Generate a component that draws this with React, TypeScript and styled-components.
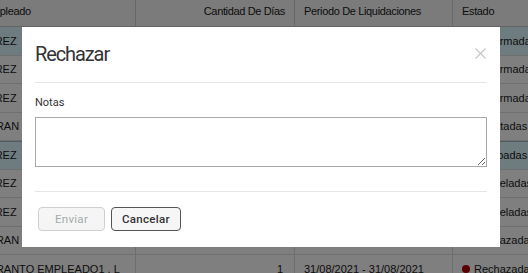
import React from "react";
import styled, { createGlobalStyle } from "styled-components";

const Global = createGlobalStyle`
  html, body { margin: 0; padding: 0; width: 528px; height: 273px; overflow: hidden; background: #fff; }
  body { font-family: "Liberation Sans", Arial, sans-serif; }
`;

const Page = styled.div`
  position: relative;
  width: 528px;
  height: 273px;
  overflow: hidden;
`;

const Table = styled.div`
  display: grid;
  grid-template-columns: 200px 159px 158px 160px;
  grid-auto-rows: 28.5px;
  grid-template-rows: 27px;
  margin-left: -65px;
  width: 677px;
  font-size: 11px;
  letter-spacing: -0.35px;
  color: #1a1a1a;
`;

const HeadCell = styled.div<{ $right?: boolean }>`
  background: #f6f6f6;
  border-bottom: 1px solid #c8c8c8;
  border-left: 1px solid #d0d0d0;
  display: flex;
  align-items: center;
  justify-content: ${(p) => (p.$right ? "flex-end" : "flex-start")};
  padding: 0 9px 4px;
  box-sizing: border-box;
  white-space: nowrap;
  overflow: hidden;
  &:first-child { border-left: none; padding-left: 49px; }
`;

const Cell = styled.div<{ $hl?: boolean; $right?: boolean; $topDark?: boolean }>`
  background: ${(p) => (p.$hl ? "#def8ff" : "#ffffff")};
  border-bottom: 1px solid #dedede;
  border-top: ${(p) => (p.$topDark ? "1px solid #a4b6c0" : "none")};
  border-left: 1px solid #dcdcdc;
  display: flex;
  align-items: center;
  justify-content: ${(p) => (p.$right ? "flex-end" : "flex-start")};
  padding: 0 11px 0 9px;
  box-sizing: border-box;
  white-space: nowrap;
  overflow: hidden;
  letter-spacing: 0;
  &:nth-child(4n + 1) { border-left: none; padding-left: 45px; }
`;

const Dot = styled.span<{ $c: string }>`
  width: 8px;
  height: 8px;
  border-radius: 50%;
  background: ${(p) => p.$c};
  margin-right: 4px;
  flex: none;
`;

const Overlay = styled.div`
  position: absolute;
  inset: 0;
  background: rgba(0, 0, 0, 0.5);
`;

const Modal = styled.div`
  position: absolute;
  left: 22px;
  top: 27px;
  width: 478px;
  height: 220px;
  background: #fff;
  display: flex;
  flex-direction: column;
  font-family: Roboto, "Noto Sans", sans-serif;
  color: #333;
`;

const Header = styled.div`
  margin: 0 13px;
  height: 55px;
  border-bottom: 1px solid #e5e5e5;
  display: flex;
  align-items: center;
  justify-content: space-between;
`;

const Title = styled.h4`
  margin: 0;
  font-size: 20px;
  font-weight: 400;
  letter-spacing: -1.1px;
  color: #333;
  padding-bottom: 1px;
`;

const Close = styled.button`
  border: none;
  background: none;
  padding: 0;
  margin-right: 1px;
  width: 12px;
  height: 12px;
  display: flex;
  align-items: center;
  justify-content: center;
  margin-bottom: 3px;
`;

const Body = styled.div`
  margin: 0 13px;
  padding: 13px 0 24px;
  border-bottom: 1px solid #e5e5e5;
  display: flex;
  flex-direction: column;
`;

const Label = styled.label`
  font-size: 11px;
  line-height: 14px;
  color: #333;
  margin-bottom: 7px;
`;

const Area = styled.textarea`
  height: 50px;
  box-sizing: border-box;
  border: 1px solid #a9a9a9;
  border-radius: 0;
  resize: vertical;
  margin: 0;
  font-family: inherit;
`;

const Footer = styled.div`
  margin: 0 13px;
  padding: 15px 3px 0;
  display: flex;
  gap: 6px;
`;

const Btn = styled.button<{ $disabled?: boolean }>`
  height: 24px;
  min-width: 67px;
  padding: 0 10px;
  box-sizing: border-box;
  border-radius: 4px;
  font-family: Roboto, "Noto Sans", sans-serif;
  font-size: 11.5px;
  font-weight: ${(p) => (p.$disabled ? 400 : 500)};
  background: ${(p) => (p.$disabled ? "#f5f5f5" : "#f6f6f6")};
  color: ${(p) => (p.$disabled ? "#a3abab" : "#333")};
  border: 1px solid ${(p) => (p.$disabled ? "#cfcfcf" : "#555")};
  letter-spacing: 0.3px;
`;

type Row = { name: string; days: string; period: string; state: string; color: string; hl?: boolean; topDark?: boolean };

const rows: Row[] = [
  { name: "PEREZ", days: "1", period: "31/08/2021 - 31/08/2021", state: "Confirmadas", color: "#2e9e44", hl: true },
  { name: "PEREZ", days: "2", period: "30/08/2021 - 31/08/2021", state: "Confirmadas", color: "#2e9e44" },
  { name: "PEREZ", days: "1", period: "27/08/2021 - 27/08/2021", state: "Confirmadas", color: "#2e9e44" },
  { name: "GARAN DIEGO", days: "3", period: "25/08/2021 - 27/08/2021", state: "Solicitadas", color: "#e8a317" },
  { name: "PEREZ", days: "1", period: "24/08/2021 - 24/08/2021", state: "Aprobadas", color: "#e8a317", hl: true, topDark: true },
  { name: "PEREZ", days: "1", period: "23/08/2021 - 23/08/2021", state: "Canceladas", color: "#888" },
  { name: "PEREZ", days: "2", period: "19/08/2021 - 20/08/2021", state: "Canceladas", color: "#888" },
  { name: "GARAN DIEGO", days: "1", period: "18/08/2021 - 18/08/2021", state: "Rechazadas", color: "#b00000" },
  { name: "GARANTO EMPLEADO1 , L", days: "1", period: "31/08/2021 - 31/08/2021", state: "Rechazadas", color: "#b00000" },
];

export default function App() {
  return (
    <Page>
      <Global />
      <Table>
        <HeadCell>Empleado</HeadCell>
        <HeadCell $right>Cantidad De Días</HeadCell>
        <HeadCell>Periodo De Liquidaciones</HeadCell>
        <HeadCell>Estado</HeadCell>
        {rows.map((r, i) => (
          <React.Fragment key={i}>
            <Cell $hl={r.hl} $topDark={r.topDark}>{r.name}</Cell>
            <Cell $hl={r.hl} $topDark={r.topDark} $right>{r.days}</Cell>
            <Cell $hl={r.hl} $topDark={r.topDark}>{r.period}</Cell>
            <Cell $hl={r.hl} $topDark={r.topDark}>
              <Dot $c={r.color} />
              {r.state}
            </Cell>
          </React.Fragment>
        ))}
      </Table>
      <Overlay />
      <Modal>
        <Header>
          <Title>Rechazar</Title>
          <Close aria-label="Cerrar">
            <svg width="11" height="11" viewBox="0 0 11 11">
              <path d="M0.5 0.5 L10.5 10.5 M10.5 0.5 L0.5 10.5" stroke="#c4c4c4" strokeWidth="1.1" fill="none" />
            </svg>
          </Close>
        </Header>
        <Body>
          <Label>Notas</Label>
          <Area />
        </Body>
        <Footer>
          <Btn $disabled disabled>Enviar</Btn>
          <Btn>Cancelar</Btn>
        </Footer>
      </Modal>
    </Page>
  );
}
